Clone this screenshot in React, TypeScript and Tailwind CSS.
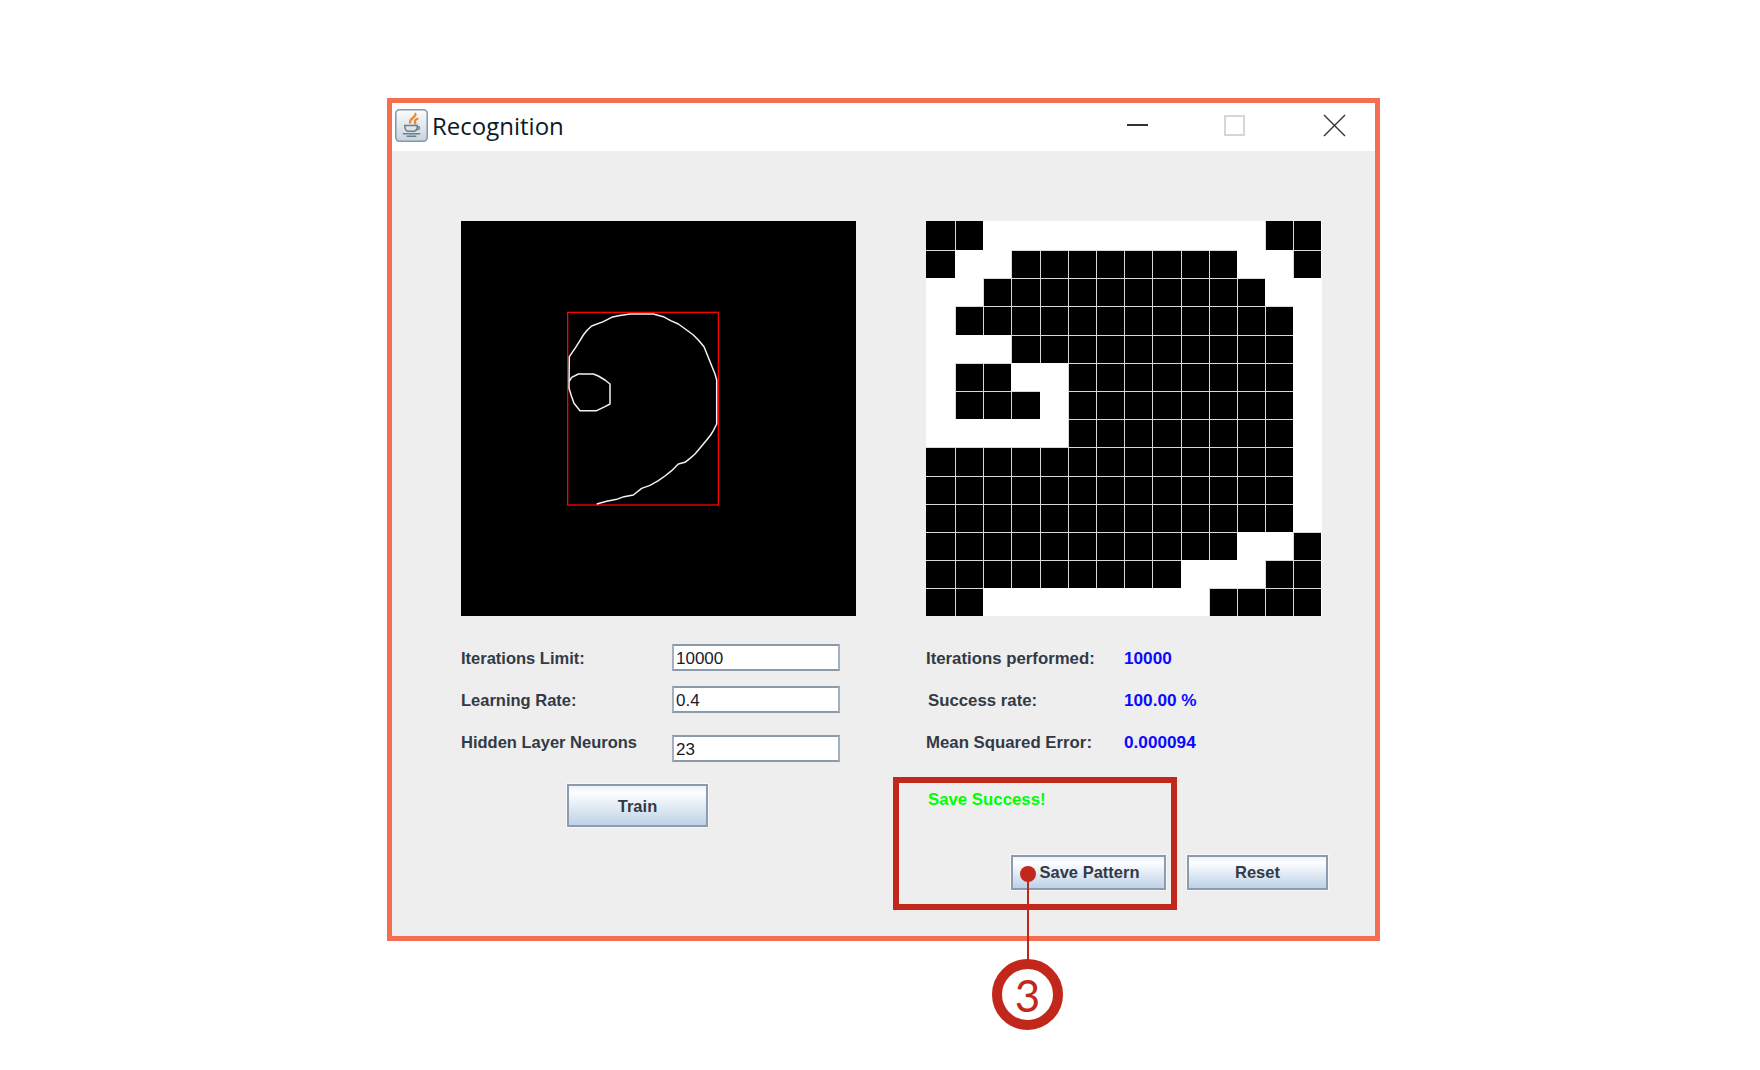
const rows = [
  "##..........##",
  "#..########..#",
  "..##########..",
  ".############.",
  "...##########.",
  ".##..########.",
  ".###.########.",
  ".....########.",
  "#############.",
  "#############.",
  "#############.",
  "###########..#",
  "#########...##",
  "##........####",
];

const curve =
  "140,612 170,604 200,598 222,590 250,585 275,565 300,556 325,542 345,528 365,512 385,492 405,487 420,475 435,462 452,442 470,420 482,405 490,392 500,372 500,240 495,222 488,205 478,180 470,160 462,140 447,122 430,105 410,90 385,72 362,62 340,50 310,42 240,42 205,47 185,52 160,65 125,78 112,90 100,105 88,125 75,145 58,170 57,265 65,290 72,310 90,332 140,332 165,320 180,312 180,252 165,240 145,228 130,222 85,222 65,232 57,245";

const sans = "font-['Liberation_Sans',Arial,sans-serif]";
const btn =
  "border-2 border-[#8c9cae] bg-gradient-to-b from-[#eef3f9] via-[#fdfeff] via-[18%] to-[#bed2e6] text-[16.500px] font-bold text-[#333a45] outline outline-1 outline-[#f8f8f8]";
const leftLabel = "w-[211px] text-[16.500px] font-bold text-[#333a45]";

function Field({ value, extra = "" }: { value: string; extra?: string }) {
  return (
    <div className={`h-[27px] w-[168px] border-2 border-[#8b9aab] border-l-[#a3b0bf] border-r-[#a3b0bf] bg-white pl-[2px] text-[17px] leading-[25px] text-[#1a1a2a] ${extra}`}>
      {value}
    </div>
  );
}

function StatRow({ label, value, indent = "" }: { label: string; value: string; indent?: string }) {
  return (
    <div className="flex h-[42px] items-center text-[16.800px] font-bold">
      <span className={`w-[198px] text-[#333a45] ${indent}`}>{label}</span>
      <span className="text-[17.200px] text-[#0a0aff]">{value}</span>
    </div>
  );
}

export default function App() {
  return (
    <div className={`relative h-[1070px] w-[1760px] overflow-hidden bg-white pl-[387px] pt-[98px] ${sans}`}>
      <div className="flex h-[843px] w-[993px] flex-col border-[5px] border-[#f56e51]">
        <div className="flex h-[48px] shrink-0 items-center bg-white">
          <svg viewBox="0 0 34 34" className="-mt-[4px] ml-[3px] h-[33px] w-[33px] shrink-0">
            <defs>
              <linearGradient id="ic" x1="0" y1="0" x2="0" y2="1">
                <stop offset="0" stopColor="#fbfcfd" />
                <stop offset="1" stopColor="#c9d3dc" />
              </linearGradient>
            </defs>
            <rect x="0.8" y="0.8" width="32.4" height="32.4" rx="4" fill="url(#ic)" stroke="#7f99b0" strokeWidth="1.6" />
            <path d="M21 5c1 3-6 5-5.500 9M23 10c-3 1.500-3 3-2 5" fill="none" stroke="#ee8a2b" strokeWidth="2.400" strokeLinecap="round" />
            <path d="M10 17h13c0 3-1 5-3 6h-7c-2-1-3-3-3-6zM23 18c3 0 3 3-.5 3.500M8 25.500h18M12 28h10" fill="none" stroke="#66808f" strokeWidth="1.500" />
          </svg>
          <span className="-mt-[2px] ml-[4px] flex-1 font-['Open_Sans',sans-serif] text-[24px] leading-none text-[#0c1a26]">Recognition</span>
          <div className="-mt-[4px] mr-[29px] flex items-center">
            <div className="h-[2px] w-[21px] bg-[#333]" />
            <div className="ml-[76px] h-[21px] w-[21px] border-2 border-[#d6d6d6]" />
            <svg viewBox="0 0 23 23" className="ml-[78px] h-[23px] w-[23px]" fill="none" stroke="#333" strokeWidth="1.400">
              <path d="M1 1l21 21M22 1L1 22" />
            </svg>
          </div>
        </div>

        <div className="flex flex-1 gap-[70px] bg-[#eeeeee] pl-[69px] pt-[70px]">
          <div className="w-[395px]">
            <svg viewBox="0 0 395 395" className="block h-[395px] w-[395px] bg-black">
              <g transform="translate(89 79) scale(0.33333)" fill="none">
                <rect x="53" y="37" width="452" height="578" stroke="#ff0000" strokeWidth="4" />
                <polyline points={curve} stroke="#f2f2f2" strokeWidth="4.500" strokeLinejoin="round" />
              </g>
            </svg>
            <div className="mt-[27.500px] flex h-[27px] items-center">
              <span className={`mt-[2px] ${leftLabel}`}>Iterations Limit:</span>
              <Field value="10000" />
            </div>
            <div className="mt-[15px] flex h-[27px] items-center">
              <span className={`mt-[2px] ${leftLabel}`}>Learning Rate:</span>
              <Field value="0.4" />
            </div>
            <div className="mt-[22.500px] flex h-[27px] items-center">
              <span className={`-mt-[12px] ${leftLabel}`}>Hidden Layer Neurons</span>
              <Field value="23" />
            </div>
            <button className={`ml-[106px] mt-[22px] block h-[43px] w-[141px] pt-[1px] ${btn}`}>Train</button>
          </div>

          <div className="w-[402px]">
            <div className="grid h-[395px] w-[395.600px] grid-cols-[29px_repeat(13,28.2px)] grid-rows-[29px_repeat(13,28.2px)] bg-white">
              {rows.flatMap((r, y) =>
                r.split("").map((c, x) => (
                  <div
                    key={`${y}-${x}`}
                    className={
                      c === "#"
                        ? `border-[#d8d8d8] bg-black ${x > 0 ? "border-l" : ""} ${y > 0 ? "border-t" : ""}`
                        : "bg-white"
                    }
                  />
                ))
              )}
            </div>
            <div className="mt-[22px]">
              <StatRow label="Iterations performed:" value="10000" />
              <StatRow label="Success rate:" value="100.00 %" indent="pl-[2px]" />
              <StatRow label="Mean Squared Error:" value="0.000094" />
            </div>
            <div className="ml-[2px] mt-[26px] flex h-[20px] items-center text-[16.800px] font-bold text-[#00ff00]">Save Success!</div>
            <div className="ml-[85px] mt-[45px] flex gap-[21px]">
              <button className={`h-[35px] w-[155px] pl-[2px] ${btn}`}>Save Pattern</button>
              <button className={`h-[35px] w-[141px] ${btn}`}>Reset</button>
            </div>
          </div>
        </div>
      </div>

      {/* annotation overlay */}
      <div className="absolute left-[893px] top-[777px] h-[133px] w-[284px] border-[6px] border-[#c1271a]" />
      <div className="absolute left-[1027px] top-[874px] h-[90px] w-[2px] bg-[#c1271a]" />
      <div className="absolute left-[1020px] top-[866px] h-[16px] w-[16px] rounded-full bg-[#c1271a]" />
      <div className="absolute left-[992px] top-[959px] flex h-[71px] w-[71px] items-center justify-center rounded-full border-[10px] border-[#c1271a] bg-white font-['Lato',sans-serif] text-[44px] font-normal leading-none text-[#c1271a]">
        3
      </div>
    </div>
  );
}
